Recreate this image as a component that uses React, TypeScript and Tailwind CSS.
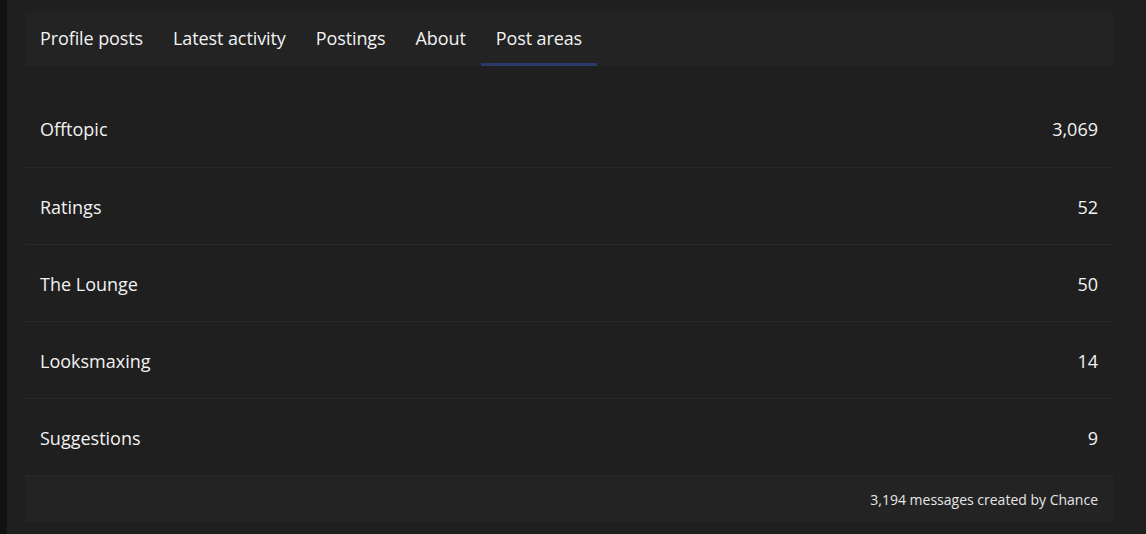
const tabs = ['Profile posts', 'Latest activity', 'Postings', 'About', 'Post areas'];

const areas = [
  { name: 'Offtopic', count: '3,069' },
  { name: 'Ratings', count: '52' },
  { name: 'The Lounge', count: '50' },
  { name: 'Looksmaxing', count: '14' },
  { name: 'Suggestions', count: '9' },
];

export default function App() {
  return (
    <div className="flex min-h-[534px] bg-[#1f1f1f] font-['Open_Sans',sans-serif] text-[#f2f2f2]">
      <div className="w-[7px] shrink-0 bg-[#121212]" />
      <div className="ml-[18px] mt-[12px] w-[1088px]">
        {/* tabs */}
        <nav className="flex h-[54px] bg-[#232323]">
          {tabs.map((t) => {
            const active = t === 'Post areas';
            return (
              <div
                key={t}
                className={`flex items-center px-[15px] pt-[2px] text-[18px] tracking-[-0.1px] border-b-[3px] ${
                  active ? 'border-[#2b3a6a]' : 'border-transparent'
                }`}
              >
                {t}
              </div>
            );
          })}
        </nav>

        <div className="mt-[24px]">
          {areas.map((a, i) => (
            <div
              key={a.name}
              className={`flex h-[77px] items-center justify-between px-[15px] pt-[2px] text-[18px] ${
                i > 0 ? 'border-t border-[#282828]' : ''
              }`}
            >
              <span>{a.name}</span>
              <span>{a.count}</span>
            </div>
          ))}
        </div>

        <div className="flex h-[47px] items-center justify-end border-t border-[#282828] bg-[#232323] px-[15px] text-[14px] text-[#e6e6e6]">
          3,194 messages created by Chance
        </div>
      </div>
    </div>
  );
}
